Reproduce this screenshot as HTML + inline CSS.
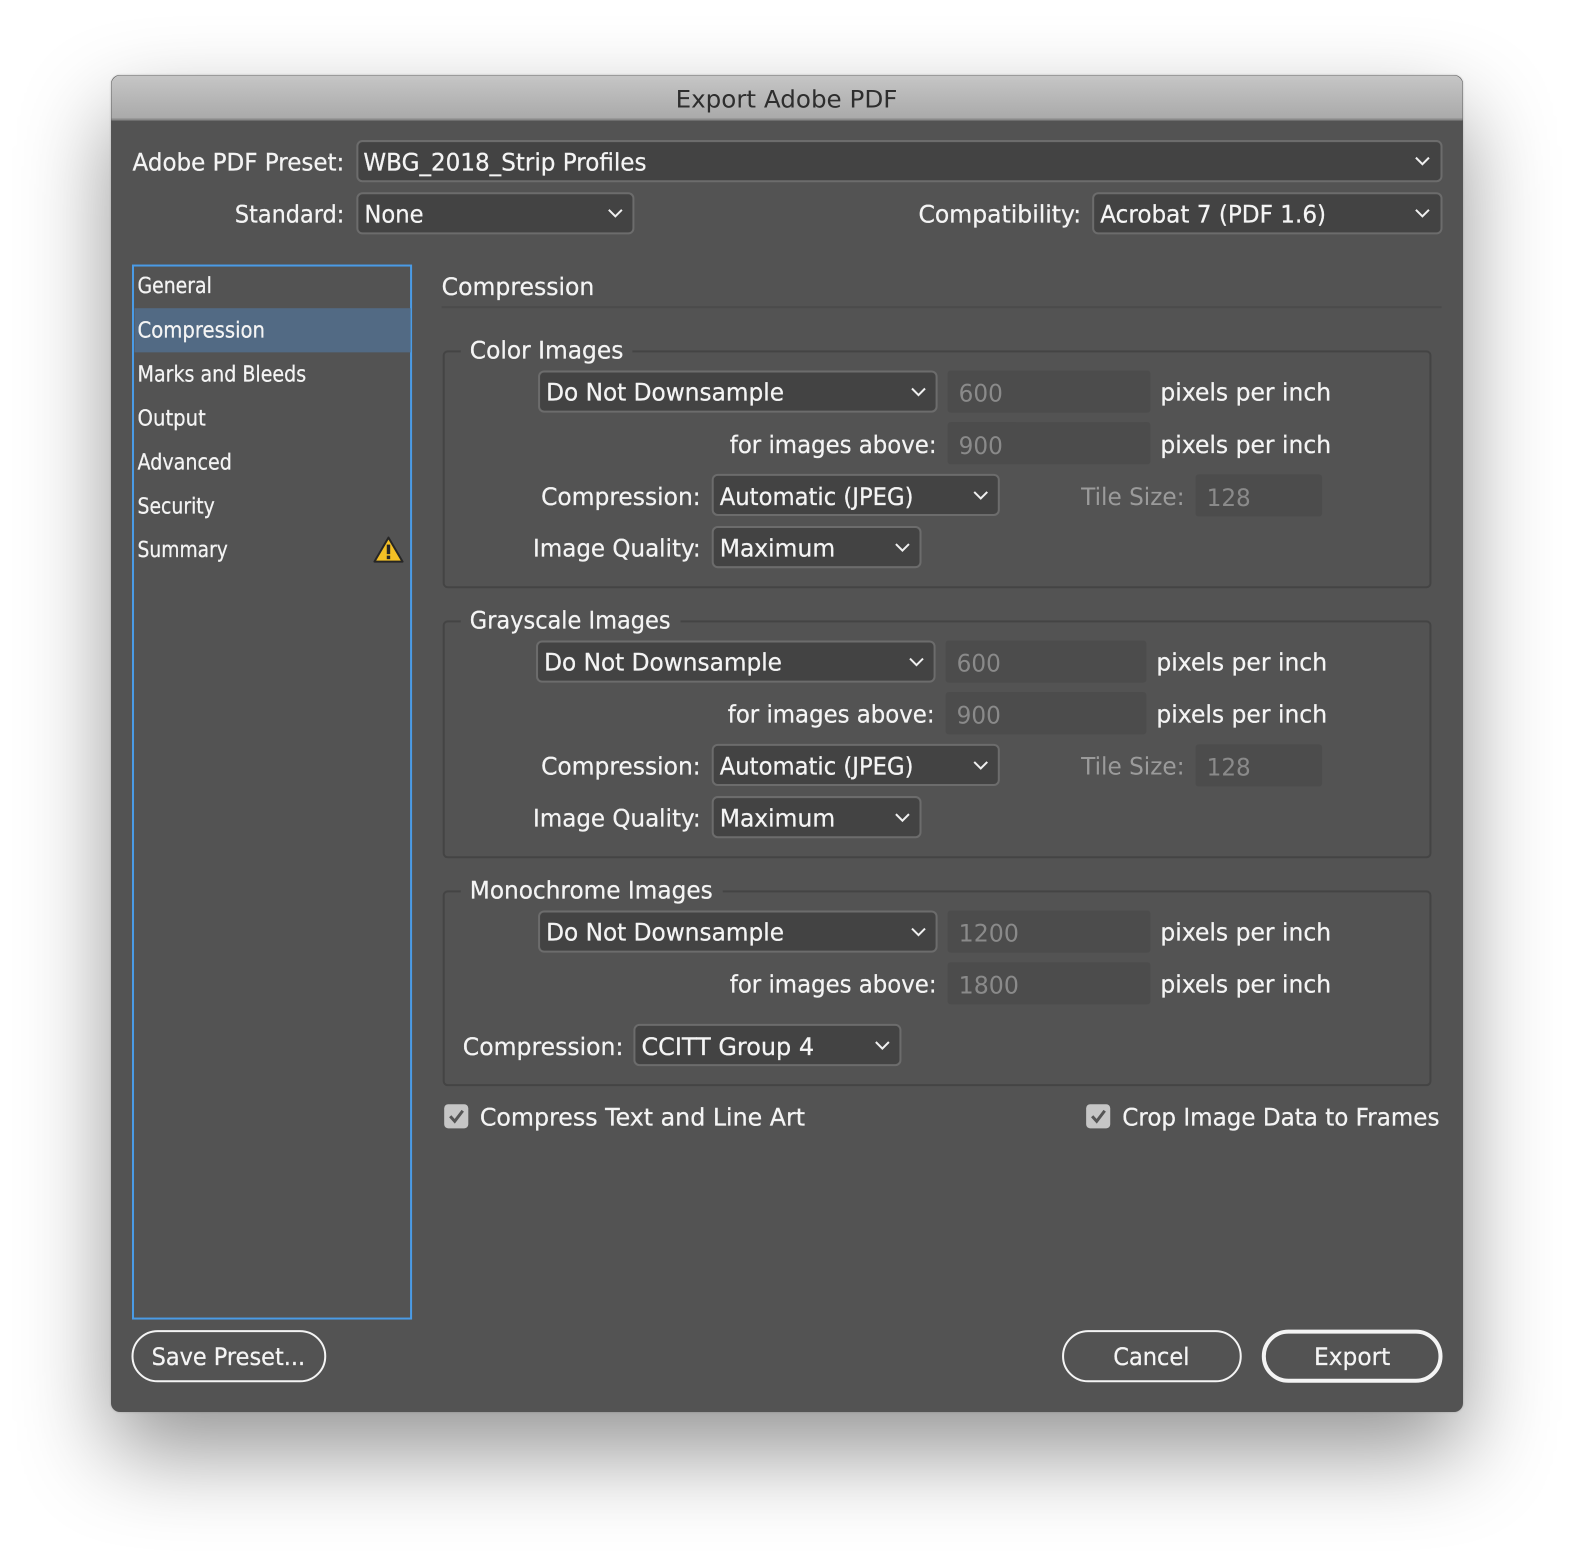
<!DOCTYPE html>
<html lang="en">
<head>
<meta charset="utf-8">
<title>Export Adobe PDF</title>
<style>
html,body{margin:0;padding:0;background:#fff;width:1574px;height:1560px;overflow:hidden}
#win{position:absolute;left:111.4px;top:75.3px;width:1351.2px;height:1337.1px;border-radius:9px;background:#535353;box-shadow:0 40px 90px rgba(0,0,0,.42),0 0 2px rgba(0,0,0,.2)}
svg{position:absolute;left:0;top:0}
text{font-family:"DejaVu Sans","Liberation Sans",sans-serif;font-size:24px;fill:#f4f4f4;stroke:#f4f4f4;stroke-width:.25px;text-rendering:geometricPrecision}
.s{font-size:22px}
.d{fill:#8a8a8a;stroke:none}
.t{fill:#9b9b9b;stroke:none}
.sel{fill:#434343;stroke:#6c6c6c;stroke-width:2}
.inp{fill:#4c4c4c}
.grp{fill:none;stroke:#444;stroke-width:2}
.chev{fill:none;stroke:#f0f0f0;stroke-width:2}
.btn{fill:none;stroke:#f4f4f4;stroke-width:2}
</style>
</head>
<body>
<div id="win"></div>
<svg width="1574" height="1560" viewBox="0 0 1568 1554" xmlns="http://www.w3.org/2000/svg">
<defs>
<linearGradient id="tb" x1="0" y1="0" x2="0" y2="1"><stop offset="0" stop-color="#c6c6c6"/><stop offset="1" stop-color="#a9a9a9"/></linearGradient>
<path id="c" class="chev" d="M-6.5 -3 L0 3.5 L6.5 -3"/>
</defs>
<path d="M111 119V84a9 9 0 0 1 9-9H1448a9 9 0 0 1 9 9V119Z" fill="url(#tb)"/>
<rect x="111" y="118" width="1346" height="2" fill="#8a8a8a"/>
<text x="673" y="107" textLength="221" lengthAdjust="spacingAndGlyphs" style="fill:#2e2e2e;stroke:none">Export Adobe PDF</text>

<text x="132" y="170" textLength="211" lengthAdjust="spacingAndGlyphs">Adobe PDF Preset:</text>
<rect class="sel" x="356" y="140.500" width="1080" height="40" rx="5"/>
<text x="362" y="170" textLength="282" lengthAdjust="spacingAndGlyphs">WBG_2018_Strip Profiles</text>
<use href="#c" x="1417" y="160"/>

<text x="234" y="221.500" textLength="109" lengthAdjust="spacingAndGlyphs">Standard:</text>
<rect class="sel" x="356" y="192.500" width="275" height="40" rx="5"/>
<text x="363" y="221.500" textLength="59" lengthAdjust="spacingAndGlyphs">None</text>
<use href="#c" x="613" y="212"/>

<text x="915" y="221.500" textLength="162" lengthAdjust="spacingAndGlyphs">Compatibility:</text>
<rect class="sel" x="1089" y="192.500" width="347" height="40" rx="5"/>
<text x="1096" y="221.500" textLength="225" lengthAdjust="spacingAndGlyphs">Acrobat 7 (PDF 1.6)</text>
<use href="#c" x="1417" y="212"/>

<rect x="132.500" y="264.500" width="277" height="1049" fill="none" stroke="#4a9be6" stroke-width="2"/>
<rect x="134" y="307" width="275" height="44" fill="#526a84"/>
<text class="s" x="137" y="292" textLength="74" lengthAdjust="spacingAndGlyphs">General</text>
<text class="s" x="137" y="336" textLength="127" lengthAdjust="spacingAndGlyphs">Compression</text>
<text class="s" x="137" y="380" textLength="168" lengthAdjust="spacingAndGlyphs">Marks and Bleeds</text>
<text class="s" x="137" y="424" textLength="68" lengthAdjust="spacingAndGlyphs">Output</text>
<text class="s" x="137" y="467.500" textLength="94" lengthAdjust="spacingAndGlyphs">Advanced</text>
<text class="s" x="137" y="511.500" textLength="77" lengthAdjust="spacingAndGlyphs">Security</text>
<text class="s" x="137" y="555" textLength="90" lengthAdjust="spacingAndGlyphs">Summary</text>
<path d="M387 535.500 L401 559.500 H373 Z" fill="#f4c025" stroke="#262626" stroke-width="2" stroke-linejoin="round"/>
<rect x="385.300" y="542.500" width="3.400" height="9.500" fill="#262626"/>
<rect x="385.300" y="553.500" width="3.400" height="3.500" fill="#262626"/>

<text x="440" y="294" textLength="152" lengthAdjust="spacingAndGlyphs">Compression</text>
<rect x="440" y="305" width="996" height="2" fill="#4b4b4b"/>

<!-- Color Images -->
<path class="grp" d="M459 350H446a4 4 0 0 0-4 4V581a4 4 0 0 0 4 4H1421a4 4 0 0 0 4-4V354a4 4 0 0 0-4-4H630"/>
<text x="468" y="357" textLength="153" lengthAdjust="spacingAndGlyphs">Color Images</text>
<rect class="sel" x="537" y="370" width="396" height="40" rx="5"/>
<text x="544" y="399" textLength="237" lengthAdjust="spacingAndGlyphs">Do Not Downsample</text>
<use href="#c" x="915" y="390"/>
<rect class="inp" x="944" y="369" width="202" height="42" rx="3"/>
<text class="d" x="955" y="400" textLength="44" lengthAdjust="spacingAndGlyphs">600</text>
<text x="1156" y="399" textLength="170" lengthAdjust="spacingAndGlyphs">pixels per inch</text>
<text x="727" y="451" textLength="206" lengthAdjust="spacingAndGlyphs">for images above:</text>
<rect class="inp" x="944" y="420.500" width="202" height="42" rx="3"/>
<text class="d" x="955" y="452" textLength="44" lengthAdjust="spacingAndGlyphs">900</text>
<text x="1156" y="451" textLength="170" lengthAdjust="spacingAndGlyphs">pixels per inch</text>
<text x="539" y="503" textLength="159" lengthAdjust="spacingAndGlyphs">Compression:</text>
<rect class="sel" x="710" y="473" width="285" height="40" rx="5"/>
<text x="717" y="503" textLength="193" lengthAdjust="spacingAndGlyphs">Automatic (JPEG)</text>
<use href="#c" x="977" y="493"/>
<text class="t" x="1077" y="503" textLength="103" lengthAdjust="spacingAndGlyphs">Tile Size:</text>
<rect class="inp" x="1191" y="472.500" width="126" height="42" rx="3"/>
<text class="d" x="1202" y="504" textLength="44" lengthAdjust="spacingAndGlyphs">128</text>
<text x="531" y="554.500" textLength="167" lengthAdjust="spacingAndGlyphs">Image Quality:</text>
<rect class="sel" x="710" y="525" width="207" height="40" rx="5"/>
<text x="717" y="554.500" textLength="115" lengthAdjust="spacingAndGlyphs">Maximum</text>
<use href="#c" x="899" y="545"/>

<!-- Grayscale Images -->
<path class="grp" d="M459 619H446a4 4 0 0 0-4 4V850a4 4 0 0 0 4 4H1421a4 4 0 0 0 4-4V623a4 4 0 0 0-4-4H678"/>
<text x="468" y="626" textLength="200" lengthAdjust="spacingAndGlyphs">Grayscale Images</text>
<rect class="sel" x="535" y="639" width="396" height="40" rx="5"/>
<text x="542" y="668" textLength="237" lengthAdjust="spacingAndGlyphs">Do Not Downsample</text>
<use href="#c" x="913" y="659"/>
<rect class="inp" x="942" y="638" width="200" height="42" rx="3"/>
<text class="d" x="953" y="669" textLength="44" lengthAdjust="spacingAndGlyphs">600</text>
<text x="1152" y="668" textLength="170" lengthAdjust="spacingAndGlyphs">pixels per inch</text>
<text x="725" y="719.500" textLength="206" lengthAdjust="spacingAndGlyphs">for images above:</text>
<rect class="inp" x="942" y="689.500" width="200" height="42" rx="3"/>
<text class="d" x="953" y="720.500" textLength="44" lengthAdjust="spacingAndGlyphs">900</text>
<text x="1152" y="719.500" textLength="170" lengthAdjust="spacingAndGlyphs">pixels per inch</text>
<text x="539" y="771.500" textLength="159" lengthAdjust="spacingAndGlyphs">Compression:</text>
<rect class="sel" x="710" y="742" width="285" height="40" rx="5"/>
<text x="717" y="771.500" textLength="193" lengthAdjust="spacingAndGlyphs">Automatic (JPEG)</text>
<use href="#c" x="977" y="762"/>
<text class="t" x="1077" y="771.500" textLength="103" lengthAdjust="spacingAndGlyphs">Tile Size:</text>
<rect class="inp" x="1191" y="741.500" width="126" height="42" rx="3"/>
<text class="d" x="1202" y="772.500" textLength="44" lengthAdjust="spacingAndGlyphs">128</text>
<text x="531" y="823.500" textLength="167" lengthAdjust="spacingAndGlyphs">Image Quality:</text>
<rect class="sel" x="710" y="794" width="207" height="40" rx="5"/>
<text x="717" y="823.500" textLength="115" lengthAdjust="spacingAndGlyphs">Maximum</text>
<use href="#c" x="899" y="814"/>

<!-- Monochrome Images -->
<path class="grp" d="M459 888H446a4 4 0 0 0-4 4V1077a4 4 0 0 0 4 4H1421a4 4 0 0 0 4-4V892a4 4 0 0 0-4-4H720"/>
<text x="468" y="895" textLength="242" lengthAdjust="spacingAndGlyphs">Monochrome Images</text>
<rect class="sel" x="537" y="908" width="396" height="40" rx="5"/>
<text x="544" y="937" textLength="237" lengthAdjust="spacingAndGlyphs">Do Not Downsample</text>
<use href="#c" x="915" y="928"/>
<rect class="inp" x="944" y="907" width="202" height="42" rx="3"/>
<text class="d" x="955" y="938" textLength="60" lengthAdjust="spacingAndGlyphs">1200</text>
<text x="1156" y="937" textLength="170" lengthAdjust="spacingAndGlyphs">pixels per inch</text>
<text x="727" y="988.500" textLength="206" lengthAdjust="spacingAndGlyphs">for images above:</text>
<rect class="inp" x="944" y="958.500" width="202" height="42" rx="3"/>
<text class="d" x="955" y="989.500" textLength="60" lengthAdjust="spacingAndGlyphs">1800</text>
<text x="1156" y="988.500" textLength="170" lengthAdjust="spacingAndGlyphs">pixels per inch</text>
<text x="461" y="1051" textLength="160" lengthAdjust="spacingAndGlyphs">Compression:</text>
<rect class="sel" x="632" y="1021" width="265" height="40" rx="5"/>
<text x="639" y="1051" textLength="172" lengthAdjust="spacingAndGlyphs">CCITT Group 4</text>
<use href="#c" x="879" y="1041"/>

<!-- Checkboxes -->
<rect x="442.500" y="1100" width="24" height="24" rx="4" fill="#c6c6c6"/>
<path d="M448.500 1112 L453 1117 L461 1106.500" fill="none" stroke="#555" stroke-width="3"/>
<text x="478" y="1121" textLength="324" lengthAdjust="spacingAndGlyphs">Compress Text and Line Art</text>
<rect x="1082" y="1100" width="24" height="24" rx="4" fill="#c6c6c6"/>
<path d="M1088 1112 L1092.500 1117 L1100.500 1106.500" fill="none" stroke="#555" stroke-width="3"/>
<text x="1118" y="1121" textLength="316" lengthAdjust="spacingAndGlyphs">Crop Image Data to Frames</text>

<!-- Buttons -->
<rect class="btn" x="132" y="1326" width="192" height="50" rx="25"/>
<text x="151" y="1360" textLength="153" lengthAdjust="spacingAndGlyphs">Save Preset...</text>
<rect class="btn" x="1059" y="1326" width="177" height="50" rx="25"/>
<text x="1109" y="1360" textLength="76" lengthAdjust="spacingAndGlyphs">Cancel</text>
<rect class="btn" x="1259" y="1326.500" width="176" height="49" rx="24.500" style="stroke-width:4"/>
<text x="1309" y="1360" textLength="76" lengthAdjust="spacingAndGlyphs">Export</text>
</svg>
</body>
</html>
